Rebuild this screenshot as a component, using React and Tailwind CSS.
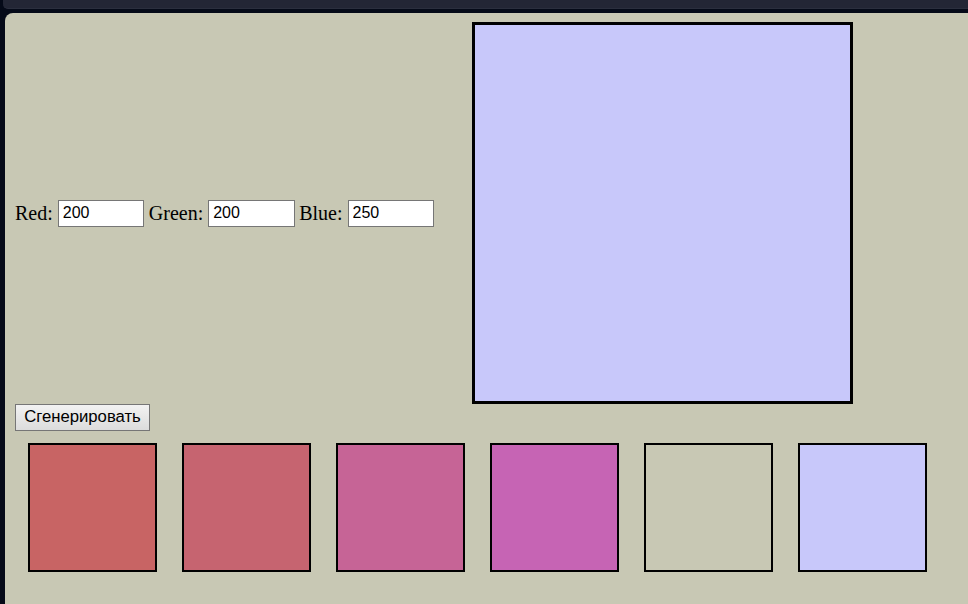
import React from "react";

const swatches = ["#c86464", "#c66470", "#c66496", "#c664b4", "#c8c8b4", "#c8c8fa"];

export default function App() {
  return (
    <div className="w-full h-screen overflow-hidden bg-[#050a18] flex flex-col">
      <div className="ml-[3px] h-[9px] shrink-0 bg-[#232635] border-b border-[#2b2f3e] rounded-bl-[5px]" />
      <div className="mt-[4px] ml-[5px] flex-1 rounded-tl-[8px] bg-[#c8c8b4] pt-[9px] pl-[10px]">
        <div className="flex items-center gap-[38px]">
          <div className="flex items-center gap-[5px] text-[20px] text-black [font-family:'Liberation_Serif',serif]">
            <span>Red:</span>
            <input
              defaultValue="200"
              className="w-[86px] h-[27px] bg-white border border-[#767676] px-[4px] text-[16px] text-black [font-family:'Liberation_Sans',sans-serif] outline-none"
            />
            <span>Green:</span>
            <input
              defaultValue="200"
              className="w-[87px] h-[27px] bg-white border border-[#767676] px-[4px] text-[16px] text-black [font-family:'Liberation_Sans',sans-serif] outline-none"
            />
            <span className="-ml-[1px]">Blue:</span>
            <input
              defaultValue="250"
              className="w-[86px] h-[27px] bg-white border border-[#767676] px-[4px] text-[16px] text-black [font-family:'Liberation_Sans',sans-serif] outline-none"
            />
          </div>
          <div className="w-[381px] h-[382px] border-[3px] border-black bg-[#c8c8fa]" />
        </div>
        <button className="block w-[135px] h-[27px] border border-[#767676] bg-gradient-to-b from-[#f2f2f2] to-[#dcdcdc] text-[16.7px] text-black [font-family:'Liberation_Sans',sans-serif] leading-none">
          Сгенерировать
        </button>
        <div className="mt-[12px] pl-[13px] flex gap-[25px]">
          {swatches.map((c, i) => (
            <div
              key={i}
              className="w-[129px] h-[129px] border-2 border-black shrink-0"
              style={{ backgroundColor: c }}
            />
          ))}
        </div>
      </div>
    </div>
  );
}
